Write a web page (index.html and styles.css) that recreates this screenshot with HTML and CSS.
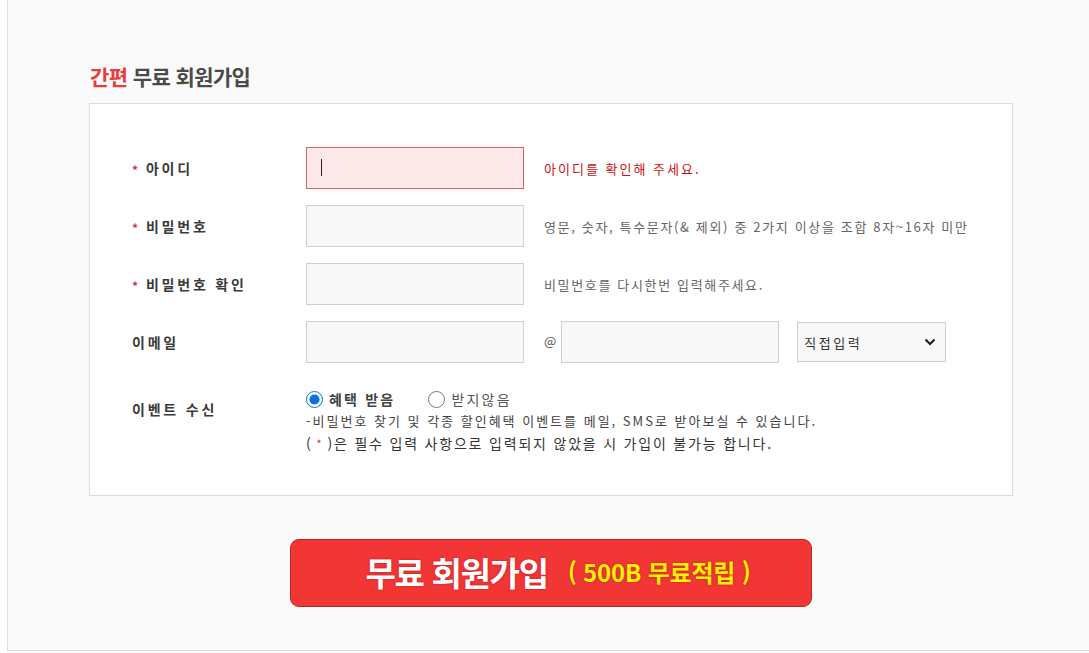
FILE: index.html
```html
<!DOCTYPE html>
<html lang="ko">
<head>
<meta charset="utf-8">
<title>간편 무료 회원가입</title>
<link rel="stylesheet" href="styles.css">
</head>
<body>
<div class="wrap">
  <h2 class="title"><span class="accent">간편</span> 무료 회원가입</h2>
  <div class="formbox">
    <div class="row">
      <div class="label"><span class="star">*</span>아이디</div>
      <div class="field">
        <span class="inputwrap focus"><input class="inp err" type="text"><span class="caret"></span></span>
        <span class="help red">아이디를 확인해 주세요.</span>
      </div>
    </div>
    <div class="row">
      <div class="label"><span class="star">*</span>비밀번호</div>
      <div class="field">
        <input class="inp" type="password">
        <span class="help">영문, 숫자, 특수문자(&amp; 제외) 중 2가지 이상을 조합 8자~16자 미만</span>
      </div>
    </div>
    <div class="row">
      <div class="label"><span class="star">*</span>비밀번호 확인</div>
      <div class="field">
        <input class="inp" type="password">
        <span class="help">비밀번호를 다시한번 입력해주세요.</span>
      </div>
    </div>
    <div class="row">
      <div class="label">이메일</div>
      <div class="field">
        <input class="inp" type="text">
        <span class="at">@</span>
        <input class="inp" type="text">
        <div class="select"><span>직접입력</span>
          <svg width="12" height="8" viewBox="0 0 12 8"><path d="M1.5 1.5 L6 6 L10.5 1.5" fill="none" stroke="#222" stroke-width="2.2"/></svg>
        </div>
      </div>
    </div>
    <div class="row event">
      <div class="label evlabel">이벤트 수신</div>
      <div class="evfield">
        <div class="radios">
          <label class="radio"><input type="radio" name="ev" checked><b>혜택 받음</b></label>
          <label class="radio"><input type="radio" name="ev"><span>받지않음</span></label>
        </div>
        <p class="note">-비밀번호 찾기 및 각종 할인혜택 이벤트를 메일, SMS로 받아보실 수 있습니다.</p>
        <p class="note big">(<span class="star2">*</span>)은 필수 입력 사항으로 입력되지 않았을 시 가입이 불가능 합니다.</p>
      </div>
    </div>
  </div>
  <div class="btnrow">
    <button class="join" type="button"><span class="main">무료 회원가입</span><span class="bonus">( 500B 무료적립 )</span></button>
  </div>
</div>
</body>
</html>
```
FILE: styles.css
```css
* { box-sizing: border-box; }
html, body { margin: 0; padding: 0; background: #fff; }
body { font-family: "Noto Sans CJK KR", "Noto Sans", sans-serif; color: #333; }

.wrap {
  margin-left: 7px;
  height: 651px;
  background: #fafafa;
  border-left: 1px solid #dedede;
  border-bottom: 1px solid #dedede;
  padding: 64px 0 0 81px;
}

.title {
  margin: 0 0 14px 1px;
  font-size: 21px;
  line-height: 25px;
  font-weight: 700;
  letter-spacing: -0.6px;
  color: #4a4a4a;
}
.title .accent { color: #ea3b40; }

.formbox {
  width: 924px;
  background: #fff;
  border: 1px solid #dcdcdc;
  padding: 43px 0 40px 42px;
  display: flex;
  flex-direction: column;
  gap: 16px;
}

.row { display: flex; align-items: center; }
.label {
  width: 174px;
  flex: none;
  font-size: 14px;
  font-weight: 700;
  color: #3a3a3a;
  letter-spacing: 2.8px;
}
.star { color: #d0343f; font-size: 12px; margin-right: 5px; font-weight: 700; position: relative; top: 1px; }

.field { display: flex; align-items: center; }
.inputwrap { position: relative; display: block; }
.inp {
  display: block;
  width: 218px;
  height: 42px;
  margin: 0;
  border: 1px solid #cfcfcf;
  background: #f8f8f8;
  outline: none;
  font: inherit;
}
.inp.err { background: #fce8e8; border-color: #d9606f; }
.caret {
  position: absolute;
  left: 15px;
  top: 12px;
  width: 1px;
  height: 17px;
  background: #222;
}
.help {
  margin-left: 20px;
  font-size: 13px;
  color: #666;
  letter-spacing: 1.65px;
}
.help.red { color: #cc1111; letter-spacing: 2px; }
.at { margin: 0 5px 0 20px; font-size: 13px; color: #555; position: relative; top: -2px; }

.select {
  margin-left: 18px;
  width: 149px;
  height: 40px;
  border: 1px solid #cfcfcf;
  background: #f8f8f8;
  display: flex;
  align-items: center;
  justify-content: space-between;
  padding: 0 9px 0 6px;
  font-size: 13px;
  color: #333;
  letter-spacing: 2.5px;
}

.event { align-items: flex-start; margin-top: 9px; }
.evlabel { padding-top: 11px; }
.evfield { font-size: 13px; color: #444; }
.radios { display: flex; gap: 33px; height: 22px; align-items: center; }
.radio { display: flex; align-items: center; gap: 6px; font-size: 14px; color: #444; letter-spacing: 2.2px; }
.radio span { color: #555; font-size: 14px; }
.radio input { width: 17px; height: 17px; margin: 0; accent-color: #0b6fe6; }
.note { margin: 0; line-height: 22px; letter-spacing: 2px; color: #444; }
.note.big { font-size: 14px; letter-spacing: 1.8px; color: #333; }
.star2 { color: #d0343f; font-size: 11px; margin: 0 4px; position: relative; top: -1px; }

.btnrow { width: 924px; display: flex; justify-content: center; padding-top: 43px; }
.join {
  width: 522px;
  height: 68px;
  border: 1px solid #b82525;
  border-radius: 9px;
  background: #f23535;
  display: flex;
  align-items: center;
  justify-content: center;
  gap: 20px;
  font-family: "Noto Sans CJK KR", sans-serif;
  padding: 0 0 3px 14px;
  cursor: pointer;
}
.join .main {
  color: #fff;
  font-size: 33px;
  font-weight: 700;
  letter-spacing: -1.3px;
  text-shadow: 0 0 2px rgba(120,0,0,0.5);
}
.join .bonus {
  color: #fff200;
  font-size: 24px;
  font-weight: 700;
  letter-spacing: -0.2px;
  text-shadow: 0 0 2px rgba(120,0,0,0.5);
}
```
